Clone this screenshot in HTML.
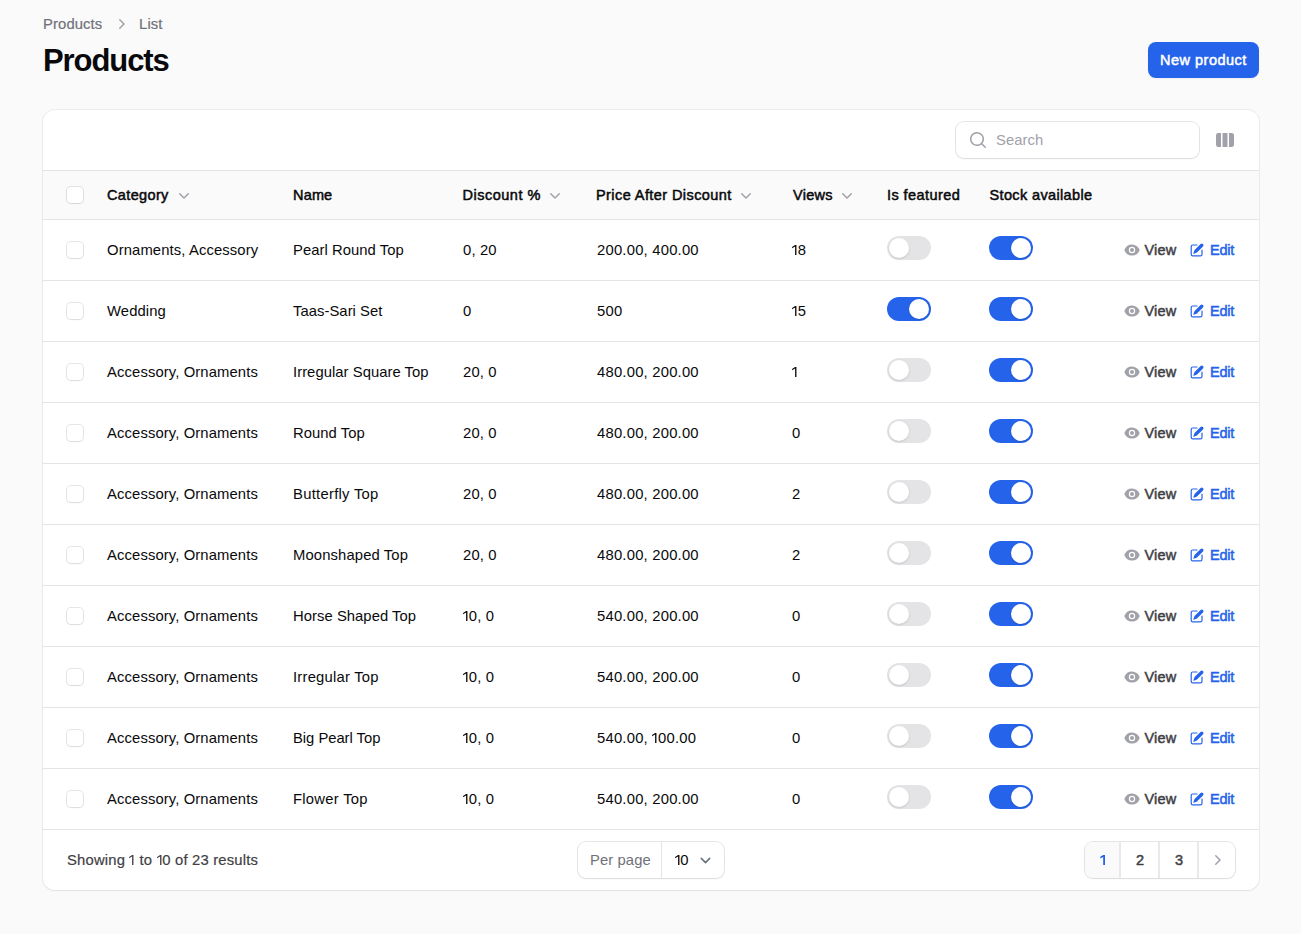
<!DOCTYPE html><html><head><meta charset="utf-8"><style>
*{box-sizing:border-box;margin:0;padding:0}
html,body{width:1301px;height:934px;overflow:hidden;background:#fafafa;font-family:"Liberation Sans",sans-serif;color:#09090b}
.t{position:absolute;white-space:nowrap;line-height:20px}
.r{font-size:14.8px;letter-spacing:0.05px}
.m{font-size:14.8px;-webkit-text-stroke:0.2px currentColor}
.s{font-size:14.5px;-webkit-text-stroke:0.5px currentColor}
.i{position:absolute;display:block}
.b{position:absolute}
.cb{position:absolute;width:16px;height:16px;border-radius:4px;background:#fff;box-shadow:0 0 0 1px rgba(9,9,11,.1),0 1px 2px rgba(0,0,0,.05)}
.tg{position:absolute;width:44px;height:24px;border-radius:12px}
.tg.off{background:#e4e4e7}
.tg.on{background:#2563eb}
.kn{position:absolute;top:2px;width:20px;height:20px;border-radius:10px;background:#fff;box-shadow:0 1px 3px rgba(0,0,0,.1),0 1px 2px -1px rgba(0,0,0,.1)}
.card{position:absolute;left:43px;top:110px;width:1216px;height:780px;background:#fff;border-radius:12px;box-shadow:0 0 0 1px rgba(9,9,11,.05),0 1px 2px rgba(0,0,0,.05)}
.wrp{position:absolute;background:#fff;border-radius:8px;box-shadow:0 0 0 1px rgba(9,9,11,.1),0 1px 2px rgba(0,0,0,.05);overflow:hidden}
</style></head><body>
<div class="t m" style="left:43px;top:14px;color:#71717a;letter-spacing:0.12px;">Products</div>
<svg class="i" style="left:111px;top:14px" width="20" height="20" viewBox="0 0 20 20"><path fill="#a1a1aa" fill-rule="evenodd" d="M8.22 5.22a.75.75 0 0 1 1.06 0l4.25 4.25a.75.75 0 0 1 0 1.06l-4.25 4.25a.75.75 0 0 1-1.06-1.06L11.94 10 8.22 6.28a.75.75 0 0 1 0-1.06Z"/></svg>
<div class="t m" style="left:139px;top:14px;color:#71717a;letter-spacing:0.15px;">List</div>
<div class="t" style="left:43px;top:41px;line-height:40px;font-size:31px;font-weight:700;letter-spacing:-1.08px;color:#09090b">Products</div>
<div class="b" style="left:1148px;top:42px;width:111px;height:36px;border-radius:8px;background:#2563eb;box-shadow:0 1px 2px rgba(0,0,0,.05)"></div>
<div class="t s" style="left:1160px;top:50px;color:#fff;letter-spacing:0.5px;">New product</div>
<div class="card"></div>
<div class="wrp" style="left:956px;top:122px;width:243px;height:36px"></div>
<svg class="i" style="left:968px;top:130px" width="20" height="20" viewBox="0 0 20 20"><path fill="#a1a1aa" fill-rule="evenodd" d="M9 3.5a5.5 5.5 0 1 0 0 11 5.5 5.5 0 0 0 0-11ZM2 9a7 7 0 1 1 12.452 4.391l3.328 3.329a.75.75 0 1 1-1.06 1.06l-3.329-3.328A7 7 0 0 1 2 9Z"/></svg>
<div class="t r" style="left:996px;top:130px;color:#a1a1aa;">Search</div>
<svg class="i" style="left:1215px;top:130px" width="20" height="20" viewBox="0 0 20 20"><path fill="#a1a1aa" d="M14 17h2.75A2.25 2.25 0 0 0 19 14.75v-9.5A2.25 2.25 0 0 0 16.75 3H14v14ZM12.5 3h-5v14h5V3ZM3.25 3H6v14H3.25A2.25 2.25 0 0 1 1 14.75v-9.5A2.25 2.25 0 0 1 3.25 3Z"/></svg>
<div class="b" style="left:43px;top:171px;width:1216px;height:48px;background:#fafafa"></div>
<div class="b" style="left:43px;top:170px;width:1216px;height:1px;background:#e4e4e7"></div>
<div class="b" style="left:43px;top:219px;width:1216px;height:1px;background:#e4e4e7"></div>
<div class="cb" style="left:67px;top:187px"></div>
<div class="t s" style="left:107px;top:185px;color:#09090b;letter-spacing:0.36px;">Category</div>
<svg class="i" style="left:174px;top:185px" width="20" height="20" viewBox="0 0 20 20"><path fill="#a1a1aa" fill-rule="evenodd" d="M5.22 8.22a.75.75 0 0 1 1.06 0L10 11.94l3.72-3.72a.75.75 0 1 1 1.06 1.06l-4.25 4.25a.75.75 0 0 1-1.06 0L5.22 9.28a.75.75 0 0 1 0-1.06Z"/></svg>
<div class="t s" style="left:293px;top:185px;color:#09090b;letter-spacing:0.17px;">Name</div>
<div class="t s" style="left:462.5px;top:185px;color:#09090b;letter-spacing:0.5px;">Discount %</div>
<svg class="i" style="left:545px;top:185px" width="20" height="20" viewBox="0 0 20 20"><path fill="#a1a1aa" fill-rule="evenodd" d="M5.22 8.22a.75.75 0 0 1 1.06 0L10 11.94l3.72-3.72a.75.75 0 1 1 1.06 1.06l-4.25 4.25a.75.75 0 0 1-1.06 0L5.22 9.28a.75.75 0 0 1 0-1.06Z"/></svg>
<div class="t s" style="left:596px;top:185px;color:#09090b;letter-spacing:0.42px;">Price After Discount</div>
<svg class="i" style="left:736px;top:185px" width="20" height="20" viewBox="0 0 20 20"><path fill="#a1a1aa" fill-rule="evenodd" d="M5.22 8.22a.75.75 0 0 1 1.06 0L10 11.94l3.72-3.72a.75.75 0 1 1 1.06 1.06l-4.25 4.25a.75.75 0 0 1-1.06 0L5.22 9.28a.75.75 0 0 1 0-1.06Z"/></svg>
<div class="t s" style="left:793px;top:185px;color:#09090b;letter-spacing:0.3px;">Views</div>
<svg class="i" style="left:837px;top:185px" width="20" height="20" viewBox="0 0 20 20"><path fill="#a1a1aa" fill-rule="evenodd" d="M5.22 8.22a.75.75 0 0 1 1.06 0L10 11.94l3.72-3.72a.75.75 0 1 1 1.06 1.06l-4.25 4.25a.75.75 0 0 1-1.06 0L5.22 9.28a.75.75 0 0 1 0-1.06Z"/></svg>
<div class="t s" style="left:887px;top:185px;color:#09090b;letter-spacing:0.42px;">Is featured</div>
<div class="t s" style="left:989.5px;top:185px;color:#09090b;letter-spacing:0.36px;">Stock available</div>
<div class="cb" style="left:67px;top:242px"></div>
<div class="t r" style="left:107px;top:240px;color:#09090b;letter-spacing:0.12px;">Ornaments, Accessory</div>
<div class="t r" style="left:293px;top:240px;color:#09090b;letter-spacing:0.05px;">Pearl Round Top</div>
<div class="t r" style="left:463px;top:240px;color:#09090b;letter-spacing:0.15px;">0, 20</div>
<div class="t r" style="left:597px;top:240px;color:#09090b;letter-spacing:0.22px;">200.00, 400.00</div>
<div class="t r" style="left:792px;top:240px;color:#09090b;letter-spacing:0.2px;"><svg width="5.8" height="20" viewBox="0 0 5.8 20" style="vertical-align:top;display:inline-block"><path fill="currentColor" d="M3.1 5H4.45V15H3.1V6.6L0.1 8.3V6.9Z"/></svg>8</div>
<div class="tg off" style="left:887px;top:236px"><div class="kn" style="left:2px"></div></div>
<div class="tg on" style="left:989px;top:236px"><div class="kn" style="left:22px"></div></div>
<svg class="i" style="left:1124px;top:242px" width="16" height="16" viewBox="0 0 20 20"><path fill="#a1a1aa" d="M10 12.5a2.5 2.5 0 1 0 0-5 2.5 2.5 0 0 0 0 5Z"/><path fill="#a1a1aa" fill-rule="evenodd" d="M.664 10.59a1.651 1.651 0 0 1 0-1.186A10.004 10.004 0 0 1 10 3c4.257 0 7.893 2.66 9.336 6.41.147.381.146.804 0 1.186A10.004 10.004 0 0 1 10 17c-4.257 0-7.893-2.66-9.336-6.41ZM14 10a4 4 0 1 1-8 0 4 4 0 0 1 8 0Z"/></svg>
<div class="t s" style="left:1144.5px;top:240px;color:#3f3f46;letter-spacing:0.2px;">View</div>
<svg class="i" style="left:1189px;top:242px" width="16" height="16" viewBox="0 0 20 20"><path fill="#2563eb" d="M5.433 13.917l1.262-3.155A4 4 0 0 1 7.58 9.42l6.92-6.918a2.121 2.121 0 0 1 3 3l-6.92 6.918c-.383.383-.84.685-1.343.886l-3.154 1.262a.5.5 0 0 1-.65-.65Z"/><path fill="#2563eb" d="M3.5 5.75c0-.69.56-1.25 1.25-1.25H10A.75.75 0 0 0 10 3H4.75A2.75 2.75 0 0 0 2 5.75v9.5A2.75 2.75 0 0 0 4.75 18h9.5A2.75 2.75 0 0 0 17 15.25V10a.75.75 0 0 0-1.5 0v5.25c0 .69-.56 1.25-1.25 1.25h-9.5c-.69 0-1.25-.56-1.25-1.25v-9.5Z"/></svg>
<div class="t s" style="left:1210px;top:240px;color:#2563eb;letter-spacing:-0.25px;">Edit</div>
<div class="b" style="left:43px;top:280px;width:1216px;height:1px;background:#e4e4e7"></div>
<div class="cb" style="left:67px;top:303px"></div>
<div class="t r" style="left:107px;top:301px;color:#09090b;letter-spacing:0.12px;">Wedding</div>
<div class="t r" style="left:293px;top:301px;color:#09090b;letter-spacing:0.05px;">Taas-Sari Set</div>
<div class="t r" style="left:463px;top:301px;color:#09090b;letter-spacing:0.15px;">0</div>
<div class="t r" style="left:597px;top:301px;color:#09090b;letter-spacing:0.22px;">500</div>
<div class="t r" style="left:792px;top:301px;color:#09090b;letter-spacing:0.2px;"><svg width="5.8" height="20" viewBox="0 0 5.8 20" style="vertical-align:top;display:inline-block"><path fill="currentColor" d="M3.1 5H4.45V15H3.1V6.6L0.1 8.3V6.9Z"/></svg>5</div>
<div class="tg on" style="left:887px;top:297px"><div class="kn" style="left:22px"></div></div>
<div class="tg on" style="left:989px;top:297px"><div class="kn" style="left:22px"></div></div>
<svg class="i" style="left:1124px;top:303px" width="16" height="16" viewBox="0 0 20 20"><path fill="#a1a1aa" d="M10 12.5a2.5 2.5 0 1 0 0-5 2.5 2.5 0 0 0 0 5Z"/><path fill="#a1a1aa" fill-rule="evenodd" d="M.664 10.59a1.651 1.651 0 0 1 0-1.186A10.004 10.004 0 0 1 10 3c4.257 0 7.893 2.66 9.336 6.41.147.381.146.804 0 1.186A10.004 10.004 0 0 1 10 17c-4.257 0-7.893-2.66-9.336-6.41ZM14 10a4 4 0 1 1-8 0 4 4 0 0 1 8 0Z"/></svg>
<div class="t s" style="left:1144.5px;top:301px;color:#3f3f46;letter-spacing:0.2px;">View</div>
<svg class="i" style="left:1189px;top:303px" width="16" height="16" viewBox="0 0 20 20"><path fill="#2563eb" d="M5.433 13.917l1.262-3.155A4 4 0 0 1 7.58 9.42l6.92-6.918a2.121 2.121 0 0 1 3 3l-6.92 6.918c-.383.383-.84.685-1.343.886l-3.154 1.262a.5.5 0 0 1-.65-.65Z"/><path fill="#2563eb" d="M3.5 5.75c0-.69.56-1.25 1.25-1.25H10A.75.75 0 0 0 10 3H4.75A2.75 2.75 0 0 0 2 5.75v9.5A2.75 2.75 0 0 0 4.75 18h9.5A2.75 2.75 0 0 0 17 15.25V10a.75.75 0 0 0-1.5 0v5.25c0 .69-.56 1.25-1.25 1.25h-9.5c-.69 0-1.25-.56-1.25-1.25v-9.5Z"/></svg>
<div class="t s" style="left:1210px;top:301px;color:#2563eb;letter-spacing:-0.25px;">Edit</div>
<div class="b" style="left:43px;top:341px;width:1216px;height:1px;background:#e4e4e7"></div>
<div class="cb" style="left:67px;top:364px"></div>
<div class="t r" style="left:107px;top:362px;color:#09090b;letter-spacing:0.12px;">Accessory, Ornaments</div>
<div class="t r" style="left:293px;top:362px;color:#09090b;letter-spacing:0.05px;">Irregular Square Top</div>
<div class="t r" style="left:463px;top:362px;color:#09090b;letter-spacing:0.15px;">20, 0</div>
<div class="t r" style="left:597px;top:362px;color:#09090b;letter-spacing:0.22px;">480.00, 200.00</div>
<div class="t r" style="left:792px;top:362px;color:#09090b;letter-spacing:0.2px;"><svg width="5.8" height="20" viewBox="0 0 5.8 20" style="vertical-align:top;display:inline-block"><path fill="currentColor" d="M3.1 5H4.45V15H3.1V6.6L0.1 8.3V6.9Z"/></svg></div>
<div class="tg off" style="left:887px;top:358px"><div class="kn" style="left:2px"></div></div>
<div class="tg on" style="left:989px;top:358px"><div class="kn" style="left:22px"></div></div>
<svg class="i" style="left:1124px;top:364px" width="16" height="16" viewBox="0 0 20 20"><path fill="#a1a1aa" d="M10 12.5a2.5 2.5 0 1 0 0-5 2.5 2.5 0 0 0 0 5Z"/><path fill="#a1a1aa" fill-rule="evenodd" d="M.664 10.59a1.651 1.651 0 0 1 0-1.186A10.004 10.004 0 0 1 10 3c4.257 0 7.893 2.66 9.336 6.41.147.381.146.804 0 1.186A10.004 10.004 0 0 1 10 17c-4.257 0-7.893-2.66-9.336-6.41ZM14 10a4 4 0 1 1-8 0 4 4 0 0 1 8 0Z"/></svg>
<div class="t s" style="left:1144.5px;top:362px;color:#3f3f46;letter-spacing:0.2px;">View</div>
<svg class="i" style="left:1189px;top:364px" width="16" height="16" viewBox="0 0 20 20"><path fill="#2563eb" d="M5.433 13.917l1.262-3.155A4 4 0 0 1 7.58 9.42l6.92-6.918a2.121 2.121 0 0 1 3 3l-6.92 6.918c-.383.383-.84.685-1.343.886l-3.154 1.262a.5.5 0 0 1-.65-.65Z"/><path fill="#2563eb" d="M3.5 5.75c0-.69.56-1.25 1.25-1.25H10A.75.75 0 0 0 10 3H4.75A2.75 2.75 0 0 0 2 5.75v9.5A2.75 2.75 0 0 0 4.75 18h9.5A2.75 2.75 0 0 0 17 15.25V10a.75.75 0 0 0-1.5 0v5.25c0 .69-.56 1.25-1.25 1.25h-9.5c-.69 0-1.25-.56-1.25-1.25v-9.5Z"/></svg>
<div class="t s" style="left:1210px;top:362px;color:#2563eb;letter-spacing:-0.25px;">Edit</div>
<div class="b" style="left:43px;top:402px;width:1216px;height:1px;background:#e4e4e7"></div>
<div class="cb" style="left:67px;top:425px"></div>
<div class="t r" style="left:107px;top:423px;color:#09090b;letter-spacing:0.12px;">Accessory, Ornaments</div>
<div class="t r" style="left:293px;top:423px;color:#09090b;letter-spacing:0.05px;">Round Top</div>
<div class="t r" style="left:463px;top:423px;color:#09090b;letter-spacing:0.15px;">20, 0</div>
<div class="t r" style="left:597px;top:423px;color:#09090b;letter-spacing:0.22px;">480.00, 200.00</div>
<div class="t r" style="left:792px;top:423px;color:#09090b;letter-spacing:0.2px;">0</div>
<div class="tg off" style="left:887px;top:419px"><div class="kn" style="left:2px"></div></div>
<div class="tg on" style="left:989px;top:419px"><div class="kn" style="left:22px"></div></div>
<svg class="i" style="left:1124px;top:425px" width="16" height="16" viewBox="0 0 20 20"><path fill="#a1a1aa" d="M10 12.5a2.5 2.5 0 1 0 0-5 2.5 2.5 0 0 0 0 5Z"/><path fill="#a1a1aa" fill-rule="evenodd" d="M.664 10.59a1.651 1.651 0 0 1 0-1.186A10.004 10.004 0 0 1 10 3c4.257 0 7.893 2.66 9.336 6.41.147.381.146.804 0 1.186A10.004 10.004 0 0 1 10 17c-4.257 0-7.893-2.66-9.336-6.41ZM14 10a4 4 0 1 1-8 0 4 4 0 0 1 8 0Z"/></svg>
<div class="t s" style="left:1144.5px;top:423px;color:#3f3f46;letter-spacing:0.2px;">View</div>
<svg class="i" style="left:1189px;top:425px" width="16" height="16" viewBox="0 0 20 20"><path fill="#2563eb" d="M5.433 13.917l1.262-3.155A4 4 0 0 1 7.58 9.42l6.92-6.918a2.121 2.121 0 0 1 3 3l-6.92 6.918c-.383.383-.84.685-1.343.886l-3.154 1.262a.5.5 0 0 1-.65-.65Z"/><path fill="#2563eb" d="M3.5 5.75c0-.69.56-1.25 1.25-1.25H10A.75.75 0 0 0 10 3H4.75A2.75 2.75 0 0 0 2 5.75v9.5A2.75 2.75 0 0 0 4.75 18h9.5A2.75 2.75 0 0 0 17 15.25V10a.75.75 0 0 0-1.5 0v5.25c0 .69-.56 1.25-1.25 1.25h-9.5c-.69 0-1.25-.56-1.25-1.25v-9.5Z"/></svg>
<div class="t s" style="left:1210px;top:423px;color:#2563eb;letter-spacing:-0.25px;">Edit</div>
<div class="b" style="left:43px;top:463px;width:1216px;height:1px;background:#e4e4e7"></div>
<div class="cb" style="left:67px;top:486px"></div>
<div class="t r" style="left:107px;top:484px;color:#09090b;letter-spacing:0.12px;">Accessory, Ornaments</div>
<div class="t r" style="left:293px;top:484px;color:#09090b;letter-spacing:0.28px;">Butterfly Top</div>
<div class="t r" style="left:463px;top:484px;color:#09090b;letter-spacing:0.15px;">20, 0</div>
<div class="t r" style="left:597px;top:484px;color:#09090b;letter-spacing:0.22px;">480.00, 200.00</div>
<div class="t r" style="left:792px;top:484px;color:#09090b;letter-spacing:0.2px;">2</div>
<div class="tg off" style="left:887px;top:480px"><div class="kn" style="left:2px"></div></div>
<div class="tg on" style="left:989px;top:480px"><div class="kn" style="left:22px"></div></div>
<svg class="i" style="left:1124px;top:486px" width="16" height="16" viewBox="0 0 20 20"><path fill="#a1a1aa" d="M10 12.5a2.5 2.5 0 1 0 0-5 2.5 2.5 0 0 0 0 5Z"/><path fill="#a1a1aa" fill-rule="evenodd" d="M.664 10.59a1.651 1.651 0 0 1 0-1.186A10.004 10.004 0 0 1 10 3c4.257 0 7.893 2.66 9.336 6.41.147.381.146.804 0 1.186A10.004 10.004 0 0 1 10 17c-4.257 0-7.893-2.66-9.336-6.41ZM14 10a4 4 0 1 1-8 0 4 4 0 0 1 8 0Z"/></svg>
<div class="t s" style="left:1144.5px;top:484px;color:#3f3f46;letter-spacing:0.2px;">View</div>
<svg class="i" style="left:1189px;top:486px" width="16" height="16" viewBox="0 0 20 20"><path fill="#2563eb" d="M5.433 13.917l1.262-3.155A4 4 0 0 1 7.58 9.42l6.92-6.918a2.121 2.121 0 0 1 3 3l-6.92 6.918c-.383.383-.84.685-1.343.886l-3.154 1.262a.5.5 0 0 1-.65-.65Z"/><path fill="#2563eb" d="M3.5 5.75c0-.69.56-1.25 1.25-1.25H10A.75.75 0 0 0 10 3H4.75A2.75 2.75 0 0 0 2 5.75v9.5A2.75 2.75 0 0 0 4.75 18h9.5A2.75 2.75 0 0 0 17 15.25V10a.75.75 0 0 0-1.5 0v5.25c0 .69-.56 1.25-1.25 1.25h-9.5c-.69 0-1.25-.56-1.25-1.25v-9.5Z"/></svg>
<div class="t s" style="left:1210px;top:484px;color:#2563eb;letter-spacing:-0.25px;">Edit</div>
<div class="b" style="left:43px;top:524px;width:1216px;height:1px;background:#e4e4e7"></div>
<div class="cb" style="left:67px;top:547px"></div>
<div class="t r" style="left:107px;top:545px;color:#09090b;letter-spacing:0.12px;">Accessory, Ornaments</div>
<div class="t r" style="left:293px;top:545px;color:#09090b;letter-spacing:0.13px;">Moonshaped Top</div>
<div class="t r" style="left:463px;top:545px;color:#09090b;letter-spacing:0.15px;">20, 0</div>
<div class="t r" style="left:597px;top:545px;color:#09090b;letter-spacing:0.22px;">480.00, 200.00</div>
<div class="t r" style="left:792px;top:545px;color:#09090b;letter-spacing:0.2px;">2</div>
<div class="tg off" style="left:887px;top:541px"><div class="kn" style="left:2px"></div></div>
<div class="tg on" style="left:989px;top:541px"><div class="kn" style="left:22px"></div></div>
<svg class="i" style="left:1124px;top:547px" width="16" height="16" viewBox="0 0 20 20"><path fill="#a1a1aa" d="M10 12.5a2.5 2.5 0 1 0 0-5 2.5 2.5 0 0 0 0 5Z"/><path fill="#a1a1aa" fill-rule="evenodd" d="M.664 10.59a1.651 1.651 0 0 1 0-1.186A10.004 10.004 0 0 1 10 3c4.257 0 7.893 2.66 9.336 6.41.147.381.146.804 0 1.186A10.004 10.004 0 0 1 10 17c-4.257 0-7.893-2.66-9.336-6.41ZM14 10a4 4 0 1 1-8 0 4 4 0 0 1 8 0Z"/></svg>
<div class="t s" style="left:1144.5px;top:545px;color:#3f3f46;letter-spacing:0.2px;">View</div>
<svg class="i" style="left:1189px;top:547px" width="16" height="16" viewBox="0 0 20 20"><path fill="#2563eb" d="M5.433 13.917l1.262-3.155A4 4 0 0 1 7.58 9.42l6.92-6.918a2.121 2.121 0 0 1 3 3l-6.92 6.918c-.383.383-.84.685-1.343.886l-3.154 1.262a.5.5 0 0 1-.65-.65Z"/><path fill="#2563eb" d="M3.5 5.75c0-.69.56-1.25 1.25-1.25H10A.75.75 0 0 0 10 3H4.75A2.75 2.75 0 0 0 2 5.75v9.5A2.75 2.75 0 0 0 4.75 18h9.5A2.75 2.75 0 0 0 17 15.25V10a.75.75 0 0 0-1.5 0v5.25c0 .69-.56 1.25-1.25 1.25h-9.5c-.69 0-1.25-.56-1.25-1.25v-9.5Z"/></svg>
<div class="t s" style="left:1210px;top:545px;color:#2563eb;letter-spacing:-0.25px;">Edit</div>
<div class="b" style="left:43px;top:585px;width:1216px;height:1px;background:#e4e4e7"></div>
<div class="cb" style="left:67px;top:608px"></div>
<div class="t r" style="left:107px;top:606px;color:#09090b;letter-spacing:0.12px;">Accessory, Ornaments</div>
<div class="t r" style="left:293px;top:606px;color:#09090b;letter-spacing:0.05px;">Horse Shaped Top</div>
<div class="t r" style="left:463px;top:606px;color:#09090b;letter-spacing:0.15px;"><svg width="5.8" height="20" viewBox="0 0 5.8 20" style="vertical-align:top;display:inline-block"><path fill="currentColor" d="M3.1 5H4.45V15H3.1V6.6L0.1 8.3V6.9Z"/></svg>0, 0</div>
<div class="t r" style="left:597px;top:606px;color:#09090b;letter-spacing:0.22px;">540.00, 200.00</div>
<div class="t r" style="left:792px;top:606px;color:#09090b;letter-spacing:0.2px;">0</div>
<div class="tg off" style="left:887px;top:602px"><div class="kn" style="left:2px"></div></div>
<div class="tg on" style="left:989px;top:602px"><div class="kn" style="left:22px"></div></div>
<svg class="i" style="left:1124px;top:608px" width="16" height="16" viewBox="0 0 20 20"><path fill="#a1a1aa" d="M10 12.5a2.5 2.5 0 1 0 0-5 2.5 2.5 0 0 0 0 5Z"/><path fill="#a1a1aa" fill-rule="evenodd" d="M.664 10.59a1.651 1.651 0 0 1 0-1.186A10.004 10.004 0 0 1 10 3c4.257 0 7.893 2.66 9.336 6.41.147.381.146.804 0 1.186A10.004 10.004 0 0 1 10 17c-4.257 0-7.893-2.66-9.336-6.41ZM14 10a4 4 0 1 1-8 0 4 4 0 0 1 8 0Z"/></svg>
<div class="t s" style="left:1144.5px;top:606px;color:#3f3f46;letter-spacing:0.2px;">View</div>
<svg class="i" style="left:1189px;top:608px" width="16" height="16" viewBox="0 0 20 20"><path fill="#2563eb" d="M5.433 13.917l1.262-3.155A4 4 0 0 1 7.58 9.42l6.92-6.918a2.121 2.121 0 0 1 3 3l-6.92 6.918c-.383.383-.84.685-1.343.886l-3.154 1.262a.5.5 0 0 1-.65-.65Z"/><path fill="#2563eb" d="M3.5 5.75c0-.69.56-1.25 1.25-1.25H10A.75.75 0 0 0 10 3H4.75A2.75 2.75 0 0 0 2 5.75v9.5A2.75 2.75 0 0 0 4.75 18h9.5A2.75 2.75 0 0 0 17 15.25V10a.75.75 0 0 0-1.5 0v5.25c0 .69-.56 1.25-1.25 1.25h-9.5c-.69 0-1.25-.56-1.25-1.25v-9.5Z"/></svg>
<div class="t s" style="left:1210px;top:606px;color:#2563eb;letter-spacing:-0.25px;">Edit</div>
<div class="b" style="left:43px;top:646px;width:1216px;height:1px;background:#e4e4e7"></div>
<div class="cb" style="left:67px;top:669px"></div>
<div class="t r" style="left:107px;top:667px;color:#09090b;letter-spacing:0.12px;">Accessory, Ornaments</div>
<div class="t r" style="left:293px;top:667px;color:#09090b;letter-spacing:0.22px;">Irregular Top</div>
<div class="t r" style="left:463px;top:667px;color:#09090b;letter-spacing:0.15px;"><svg width="5.8" height="20" viewBox="0 0 5.8 20" style="vertical-align:top;display:inline-block"><path fill="currentColor" d="M3.1 5H4.45V15H3.1V6.6L0.1 8.3V6.9Z"/></svg>0, 0</div>
<div class="t r" style="left:597px;top:667px;color:#09090b;letter-spacing:0.22px;">540.00, 200.00</div>
<div class="t r" style="left:792px;top:667px;color:#09090b;letter-spacing:0.2px;">0</div>
<div class="tg off" style="left:887px;top:663px"><div class="kn" style="left:2px"></div></div>
<div class="tg on" style="left:989px;top:663px"><div class="kn" style="left:22px"></div></div>
<svg class="i" style="left:1124px;top:669px" width="16" height="16" viewBox="0 0 20 20"><path fill="#a1a1aa" d="M10 12.5a2.5 2.5 0 1 0 0-5 2.5 2.5 0 0 0 0 5Z"/><path fill="#a1a1aa" fill-rule="evenodd" d="M.664 10.59a1.651 1.651 0 0 1 0-1.186A10.004 10.004 0 0 1 10 3c4.257 0 7.893 2.66 9.336 6.41.147.381.146.804 0 1.186A10.004 10.004 0 0 1 10 17c-4.257 0-7.893-2.66-9.336-6.41ZM14 10a4 4 0 1 1-8 0 4 4 0 0 1 8 0Z"/></svg>
<div class="t s" style="left:1144.5px;top:667px;color:#3f3f46;letter-spacing:0.2px;">View</div>
<svg class="i" style="left:1189px;top:669px" width="16" height="16" viewBox="0 0 20 20"><path fill="#2563eb" d="M5.433 13.917l1.262-3.155A4 4 0 0 1 7.58 9.42l6.92-6.918a2.121 2.121 0 0 1 3 3l-6.92 6.918c-.383.383-.84.685-1.343.886l-3.154 1.262a.5.5 0 0 1-.65-.65Z"/><path fill="#2563eb" d="M3.5 5.75c0-.69.56-1.25 1.25-1.25H10A.75.75 0 0 0 10 3H4.75A2.75 2.75 0 0 0 2 5.75v9.5A2.75 2.75 0 0 0 4.75 18h9.5A2.75 2.75 0 0 0 17 15.25V10a.75.75 0 0 0-1.5 0v5.25c0 .69-.56 1.25-1.25 1.25h-9.5c-.69 0-1.25-.56-1.25-1.25v-9.5Z"/></svg>
<div class="t s" style="left:1210px;top:667px;color:#2563eb;letter-spacing:-0.25px;">Edit</div>
<div class="b" style="left:43px;top:707px;width:1216px;height:1px;background:#e4e4e7"></div>
<div class="cb" style="left:67px;top:730px"></div>
<div class="t r" style="left:107px;top:728px;color:#09090b;letter-spacing:0.12px;">Accessory, Ornaments</div>
<div class="t r" style="left:293px;top:728px;color:#09090b;letter-spacing:-0.03px;">Big Pearl Top</div>
<div class="t r" style="left:463px;top:728px;color:#09090b;letter-spacing:0.15px;"><svg width="5.8" height="20" viewBox="0 0 5.8 20" style="vertical-align:top;display:inline-block"><path fill="currentColor" d="M3.1 5H4.45V15H3.1V6.6L0.1 8.3V6.9Z"/></svg>0, 0</div>
<div class="t r" style="left:597px;top:728px;color:#09090b;letter-spacing:0.22px;">540.00, <svg width="5.8" height="20" viewBox="0 0 5.8 20" style="vertical-align:top;display:inline-block"><path fill="currentColor" d="M3.1 5H4.45V15H3.1V6.6L0.1 8.3V6.9Z"/></svg>00.00</div>
<div class="t r" style="left:792px;top:728px;color:#09090b;letter-spacing:0.2px;">0</div>
<div class="tg off" style="left:887px;top:724px"><div class="kn" style="left:2px"></div></div>
<div class="tg on" style="left:989px;top:724px"><div class="kn" style="left:22px"></div></div>
<svg class="i" style="left:1124px;top:730px" width="16" height="16" viewBox="0 0 20 20"><path fill="#a1a1aa" d="M10 12.5a2.5 2.5 0 1 0 0-5 2.5 2.5 0 0 0 0 5Z"/><path fill="#a1a1aa" fill-rule="evenodd" d="M.664 10.59a1.651 1.651 0 0 1 0-1.186A10.004 10.004 0 0 1 10 3c4.257 0 7.893 2.66 9.336 6.41.147.381.146.804 0 1.186A10.004 10.004 0 0 1 10 17c-4.257 0-7.893-2.66-9.336-6.41ZM14 10a4 4 0 1 1-8 0 4 4 0 0 1 8 0Z"/></svg>
<div class="t s" style="left:1144.5px;top:728px;color:#3f3f46;letter-spacing:0.2px;">View</div>
<svg class="i" style="left:1189px;top:730px" width="16" height="16" viewBox="0 0 20 20"><path fill="#2563eb" d="M5.433 13.917l1.262-3.155A4 4 0 0 1 7.58 9.42l6.92-6.918a2.121 2.121 0 0 1 3 3l-6.92 6.918c-.383.383-.84.685-1.343.886l-3.154 1.262a.5.5 0 0 1-.65-.65Z"/><path fill="#2563eb" d="M3.5 5.75c0-.69.56-1.25 1.25-1.25H10A.75.75 0 0 0 10 3H4.75A2.75 2.75 0 0 0 2 5.75v9.5A2.75 2.75 0 0 0 4.75 18h9.5A2.75 2.75 0 0 0 17 15.25V10a.75.75 0 0 0-1.5 0v5.25c0 .69-.56 1.25-1.25 1.25h-9.5c-.69 0-1.25-.56-1.25-1.25v-9.5Z"/></svg>
<div class="t s" style="left:1210px;top:728px;color:#2563eb;letter-spacing:-0.25px;">Edit</div>
<div class="b" style="left:43px;top:768px;width:1216px;height:1px;background:#e4e4e7"></div>
<div class="cb" style="left:67px;top:791px"></div>
<div class="t r" style="left:107px;top:789px;color:#09090b;letter-spacing:0.12px;">Accessory, Ornaments</div>
<div class="t r" style="left:293px;top:789px;color:#09090b;letter-spacing:0.27px;">Flower Top</div>
<div class="t r" style="left:463px;top:789px;color:#09090b;letter-spacing:0.15px;"><svg width="5.8" height="20" viewBox="0 0 5.8 20" style="vertical-align:top;display:inline-block"><path fill="currentColor" d="M3.1 5H4.45V15H3.1V6.6L0.1 8.3V6.9Z"/></svg>0, 0</div>
<div class="t r" style="left:597px;top:789px;color:#09090b;letter-spacing:0.22px;">540.00, 200.00</div>
<div class="t r" style="left:792px;top:789px;color:#09090b;letter-spacing:0.2px;">0</div>
<div class="tg off" style="left:887px;top:785px"><div class="kn" style="left:2px"></div></div>
<div class="tg on" style="left:989px;top:785px"><div class="kn" style="left:22px"></div></div>
<svg class="i" style="left:1124px;top:791px" width="16" height="16" viewBox="0 0 20 20"><path fill="#a1a1aa" d="M10 12.5a2.5 2.5 0 1 0 0-5 2.5 2.5 0 0 0 0 5Z"/><path fill="#a1a1aa" fill-rule="evenodd" d="M.664 10.59a1.651 1.651 0 0 1 0-1.186A10.004 10.004 0 0 1 10 3c4.257 0 7.893 2.66 9.336 6.41.147.381.146.804 0 1.186A10.004 10.004 0 0 1 10 17c-4.257 0-7.893-2.66-9.336-6.41ZM14 10a4 4 0 1 1-8 0 4 4 0 0 1 8 0Z"/></svg>
<div class="t s" style="left:1144.5px;top:789px;color:#3f3f46;letter-spacing:0.2px;">View</div>
<svg class="i" style="left:1189px;top:791px" width="16" height="16" viewBox="0 0 20 20"><path fill="#2563eb" d="M5.433 13.917l1.262-3.155A4 4 0 0 1 7.58 9.42l6.92-6.918a2.121 2.121 0 0 1 3 3l-6.92 6.918c-.383.383-.84.685-1.343.886l-3.154 1.262a.5.5 0 0 1-.65-.65Z"/><path fill="#2563eb" d="M3.5 5.75c0-.69.56-1.25 1.25-1.25H10A.75.75 0 0 0 10 3H4.75A2.75 2.75 0 0 0 2 5.75v9.5A2.75 2.75 0 0 0 4.75 18h9.5A2.75 2.75 0 0 0 17 15.25V10a.75.75 0 0 0-1.5 0v5.25c0 .69-.56 1.25-1.25 1.25h-9.5c-.69 0-1.25-.56-1.25-1.25v-9.5Z"/></svg>
<div class="t s" style="left:1210px;top:789px;color:#2563eb;letter-spacing:-0.25px;">Edit</div>
<div class="b" style="left:43px;top:829px;width:1216px;height:1px;background:#e4e4e7"></div>
<div class="t m" style="left:67px;top:850px;color:#3f3f46;letter-spacing:0.19px;">Showing <svg width="5.8" height="20" viewBox="0 0 5.8 20" style="vertical-align:top;display:inline-block"><path fill="currentColor" d="M3.1 5H4.45V15H3.1V6.6L0.1 8.3V6.9Z"/></svg> to <svg width="5.8" height="20" viewBox="0 0 5.8 20" style="vertical-align:top;display:inline-block"><path fill="currentColor" d="M3.1 5H4.45V15H3.1V6.6L0.1 8.3V6.9Z"/></svg>0 of 23 results</div>
<div class="wrp" style="left:578px;top:842px;width:146px;height:36px"></div>
<div class="b" style="left:661px;top:842px;width:1px;height:36px;background:#e4e4e7"></div>
<div class="t r" style="left:590px;top:850px;color:#71717a;letter-spacing:0.1px;">Per page</div>
<div class="t r" style="left:674.5px;top:850px;color:#09090b;"><svg width="5.8" height="20" viewBox="0 0 5.8 20" style="vertical-align:top;display:inline-block"><path fill="currentColor" d="M3.1 5H4.45V15H3.1V6.6L0.1 8.3V6.9Z"/></svg>0</div>
<svg class="i" style="left:695px;top:850px" width="21" height="21" viewBox="0 0 20 20"><path fill="none" stroke="#6b7280" stroke-linecap="round" stroke-linejoin="round" stroke-width="1.5" d="M6 8l4 4 4-4"/></svg>
<div class="wrp" style="left:1085px;top:842px;width:150px;height:36px"></div>
<div class="b" style="left:1085px;top:842px;width:35px;height:36px;background:#fafafa;border-radius:8px 0 0 8px"></div>
<div class="b" style="left:1119px;top:842px;width:2px;height:36px;background:#e9e9ec"></div>
<div class="b" style="left:1158px;top:842px;width:2px;height:36px;background:#e9e9ec"></div>
<div class="b" style="left:1197px;top:842px;width:2px;height:36px;background:#e9e9ec"></div>
<div class="t s" style="left:1099.5px;top:850px;color:#2563eb;"><svg width="6" height="20" viewBox="0 0 6 20" style="vertical-align:top;display:inline-block"><path fill="currentColor" d="M3.2 5H5V15H3.2V6.9L0.3 8.6V6.8Z"/></svg></div>
<div class="t s" style="left:1136px;top:850px;color:#3f3f46;">2</div>
<div class="t s" style="left:1175px;top:850px;color:#3f3f46;">3</div>
<svg class="i" style="left:1207px;top:850px" width="20" height="20" viewBox="0 0 20 20"><path fill="#a1a1aa" fill-rule="evenodd" d="M8.22 5.22a.75.75 0 0 1 1.06 0l4.25 4.25a.75.75 0 0 1 0 1.06l-4.25 4.25a.75.75 0 0 1-1.06-1.06L11.94 10 8.22 6.28a.75.75 0 0 1 0-1.06Z"/></svg>
</body></html>
